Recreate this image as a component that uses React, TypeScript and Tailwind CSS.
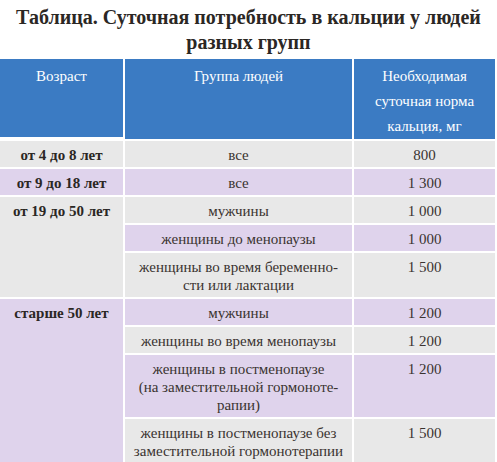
import React from "react";

type Sub = { group: string; value: string; bg: "g" | "p" };

const bgCls = (b: "g" | "p") => (b === "g" ? "bg-[#e8e8e8]" : "bg-[#dfd3ec]");

function SubCells({ s }: { s: Sub }) {
  return (
    <>
      <div className={`${bgCls(s.bg)} px-2 pt-[5px] pb-[3px] text-center leading-[18px] whitespace-pre-line`}>{s.group}</div>
      <div className={`${bgCls(s.bg)} px-2 pt-[5px] pb-[3px] text-center leading-[18px]`}>{s.value}</div>
    </>
  );
}

export default function App() {
  const g3: Sub[] = [
    { group: "мужчины", value: "1 000", bg: "g" },
    { group: "женщины до менопаузы", value: "1 000", bg: "p" },
    { group: "женщины во время беременно-\nсти или лактации", value: "1 500", bg: "g" },
  ];
  const g4: Sub[] = [
    { group: "мужчины", value: "1 200", bg: "p" },
    { group: "женщины во время менопаузы", value: "1 200", bg: "g" },
    { group: "женщины в постменопаузе\n(на заместительной гормоноте-\nрапии)", value: "1 200", bg: "p" },
    { group: "женщины в постменопаузе без\nзаместительной гормонотерапии", value: "1 500", bg: "g" },
  ];
  return (
    <div className="w-[497px] h-[462px] bg-white overflow-hidden text-[#3a3330] font-['Liberation_Serif','Tinos','Times_New_Roman','Times','FreeSerif',serif]">
      <h1 className="pt-[5px] pb-[4px] text-center text-[20px] leading-[25px] font-bold text-[#2b2724]">
        Таблица. Суточная потребность в кальции у людей
        <br />
        разных групп
      </h1>
      <div className="grid grid-cols-[123px_227px_141px] gap-[2px] text-[15px]">
        <div className="bg-[#3b7bc3] text-white text-center pt-[5px] h-[78px] leading-[25px]">Возраст</div>
        <div className="bg-[#3b7bc3] text-white text-center pt-[5px] leading-[25px]">Группа людей</div>
        <div className="bg-[#3b7bc3] text-white text-center pt-[5px] leading-[25px]">
          Необходимая
          <br />
          суточная норма
          <br />
          кальция, мг
        </div>

        <div className="bg-[#e8e8e8] font-bold text-center pt-[5px] pb-[3px] leading-[18px] text-[#2b2724]">от 4 до 8 лет</div>
        <div className="bg-[#e8e8e8] text-center pt-[5px] pb-[3px] leading-[18px]">все</div>
        <div className="bg-[#e8e8e8] text-center pt-[5px] pb-[3px] leading-[18px]">800</div>

        <div className="bg-[#dfd3ec] font-bold text-center pt-[5px] pb-[3px] leading-[18px] text-[#2b2724]">от 9 до 18 лет</div>
        <div className="bg-[#dfd3ec] text-center pt-[5px] pb-[3px] leading-[18px]">все</div>
        <div className="bg-[#dfd3ec] text-center pt-[5px] pb-[3px] leading-[18px]">1 300</div>

        <div className="row-span-3 bg-[#e8e8e8] font-bold text-center pt-[5px] leading-[18px] text-[#2b2724]">от 19 до 50 лет</div>
        {g3.map((s, i) => (
          <SubCells key={i} s={s} />
        ))}

        <div className="row-span-4 bg-[#dfd3ec] font-bold text-center pt-[5px] leading-[18px] text-[#2b2724]">старше 50 лет</div>
        {g4.map((s, i) => (
          <SubCells key={i} s={s} />
        ))}
      </div>
    </div>
  );
}
